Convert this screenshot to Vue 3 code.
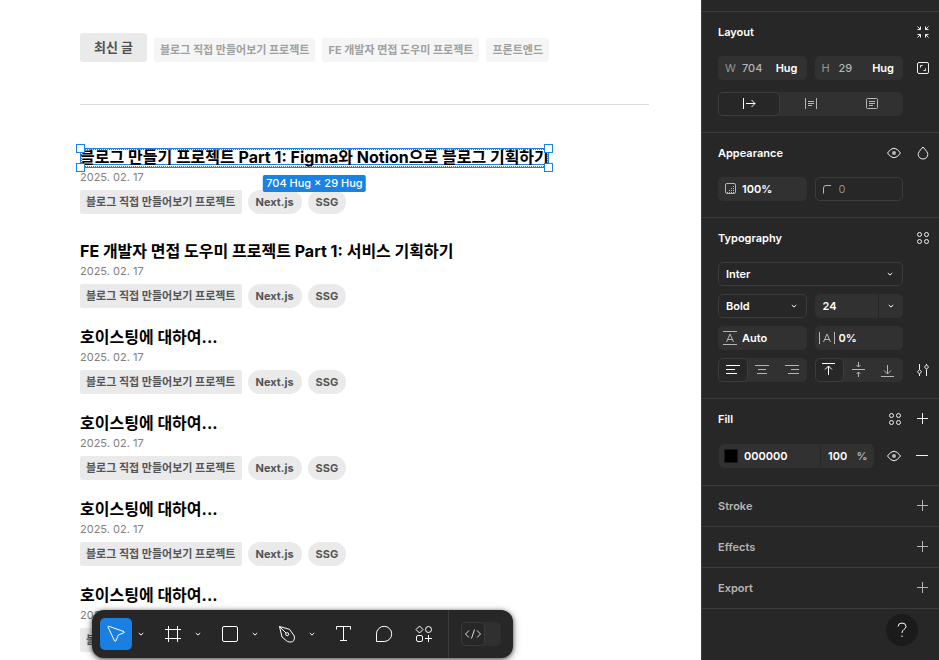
<script setup>
import { ref } from 'vue'

const category = ref('최신 글')
const categories = ['최신 글', '블로그 직접 만들어보기 프로젝트', 'FE 개발자 면접 도우미 프로젝트', '프론트엔드']

const posts = [
  { title: '블로그 만들기 프로젝트 Part 1: Figma와 Notion으로 블로그 기획하기', selected: true },
  { title: 'FE 개발자 면접 도우미 프로젝트 Part 1: 서비스 기획하기' },
  { title: '호이스팅에 대하여...' },
  { title: '호이스팅에 대하여...' },
  { title: '호이스팅에 대하여...' },
  { title: '호이스팅에 대하여...' },
]

const width = ref('704')
const height = ref('29')
const opacity = ref('100%')
const radius = ref('0')
const family = ref('Inter')
const weight = ref('Bold')
const size = ref('24')
const lineHeight = ref('Auto')
const spacing = ref('0%')
const fill = ref('000000')
const fillOpacity = ref('100')
</script>

<template>
  <div class="editor">
    <main class="canvas">
      <nav class="chips">
        <button
          v-for="name in categories"
          :key="name"
          class="chip"
          :class="{ active: name === category }"
          @click="category = name"
        >{{ name }}</button>
      </nav>
      <hr class="rule">
      <section class="posts">
        <article v-for="(post, i) in posts" :key="i" class="post" :class="{ lead: post.selected }">
          <h2 class="title" :class="{ selected: post.selected }">
            {{ post.title }}
            <span v-if="post.selected" class="selection">
              <i class="handle tl"></i><i class="handle tr"></i><i class="handle bl"></i><i class="handle br"></i>
              <span class="size-tag">704 Hug × 29 Hug</span>
            </span>
          </h2>
          <time class="date" datetime="2025-02-17">2025. 02. 17</time>
          <div class="tags">
            <span class="tag series">블로그 직접 만들어보기 프로젝트</span>
            <span class="tag">Next.js</span>
            <span class="tag">SSG</span>
          </div>
        </article>
      </section>

      <div class="toolbar" role="toolbar" aria-label="Tools">
        <div class="tool-group">
          <button class="tool on" aria-label="Move">
            <svg class="i24" viewBox="0 0 24 24"><path d="M4.6 4.2 20 9.6q.9.5 0 1.1l-5.6 2.3-2.6 6q-.7 1-1.2 0L4 5q-.2-.8.6-.8z" /></svg>
          </button>
          <button class="more" aria-label="More move tools"><svg class="chev" viewBox="0 0 8 8"><path d="m1.8 3 2.2 2.1L6.2 3" /></svg></button>
        </div>
        <div class="tool-group">
          <button class="tool" aria-label="Frame">
            <svg class="i24" viewBox="0 0 24 24"><path d="M7.5 4v16M16.5 4v16M4 7.5h16M4 16.5h16" /></svg>
          </button>
          <button class="more" aria-label="More frame tools"><svg class="chev" viewBox="0 0 8 8"><path d="m1.8 3 2.2 2.1L6.2 3" /></svg></button>
        </div>
        <div class="tool-group">
          <button class="tool" aria-label="Rectangle">
            <svg class="i24" viewBox="0 0 24 24"><rect x="4.5" y="4.5" width="15" height="15" rx="1.5" /></svg>
          </button>
          <button class="more" aria-label="More shape tools"><svg class="chev" viewBox="0 0 8 8"><path d="m1.8 3 2.2 2.1L6.2 3" /></svg></button>
        </div>
        <div class="tool-group">
          <button class="tool" aria-label="Pen">
            <svg class="i24" viewBox="0 0 24 24"><path d="M4.5 4.5 14.5 7.3 19.3 14q.6 2-.5 4.6l-1.2 1.1q-3 .8-5.2-.2L7 15zM4.5 4.5l6.7 6.7" /><circle cx="12.2" cy="12.2" r="1.5" /></svg>
          </button>
          <button class="more" aria-label="More drawing tools"><svg class="chev" viewBox="0 0 8 8"><path d="m1.8 3 2.2 2.1L6.2 3" /></svg></button>
        </div>
        <button class="tool" aria-label="Text">
          <svg class="i24" viewBox="0 0 24 24"><path d="M4.5 7.5v-3h14v3M11.5 4.5v14M8 18.5h7" /></svg>
        </button>
        <button class="tool" aria-label="Comment">
          <svg class="i24" viewBox="0 0 24 24"><path d="M4.5 19.5v-7.6a7.6 7.6 0 1 1 7.6 7.6z" /></svg>
        </button>
        <button class="tool" aria-label="Actions">
          <svg class="i24" viewBox="0 0 24 24"><path d="m7.5 4 3.5 3.5L7.5 11 4 7.5zM16.5 13v7M13 16.5h7" /><circle cx="16.5" cy="7.5" r="3" /><rect x="4.5" y="13.5" width="6" height="6" rx="1.5" /></svg>
        </button>
        <span class="split"></span>
        <button class="dev" aria-label="Dev Mode">
          <span class="knob"><svg class="i18" viewBox="0 0 18 18"><path d="M5 5.5 1.5 9 5 12.500M13 5.5 16.5 9 13 12.5M10.5 4.5l-3 9" /></svg></span>
        </button>
      </div>
    </main>

    <aside class="panel">
      <section class="section">
        <header class="head"><h3>Layout</h3>
          <button class="icon" aria-label="Resize to fit"><svg class="i24" viewBox="0 0 24 24"><path d="m6.5 6.5 3 3M6.5 9.5h3v-3M17.5 6.5l-3 3M17.5 9.5h-3v-3M6.5 17.5l3-3M6.5 14.5h3v3M17.5 17.5l-3-3M17.5 14.5h-3v3" /></svg></button>
        </header>
        <div class="rows wide">
          <div class="grid">
            <label class="field muted"><span class="key">W</span><input v-model="width"><b class="hug">Hug</b></label>
            <label class="field muted"><span class="key">H</span><input v-model="height"><b class="hug">Hug</b></label>
            <button class="icon" aria-label="Constrain proportions"><svg class="i24" viewBox="0 0 24 24"><rect x="6.5" y="6.5" width="11" height="11" rx="1.5" /><path d="M9.5 11.5v-2h2M14.5 12.5v2h-2" /></svg></button>
          </div>
          <div class="grid">
            <div class="segments span">
              <button class="on" aria-label="Auto width"><svg class="i24" viewBox="0 0 24 24"><path d="M6.5 6v11M9 11.5h9M14.5 8l3.5 3.5-3.5 3.5" /></svg></button>
              <button aria-label="Auto height"><svg class="i24" viewBox="0 0 24 24"><path d="M6.5 6v11M17.5 6v11M9 9.5h6M9 11.5h6M9 13.5h4" /></svg></button>
              <button aria-label="Fixed size"><svg class="i24" viewBox="0 0 24 24"><rect x="6.5" y="6.5" width="11" height="10" rx="1" /><path d="M9 9.5h6M9 11.5h6M9 13.5h4" /></svg></button>
            </div>
          </div>
        </div>
      </section>

      <section class="section">
        <header class="head"><h3>Appearance</h3>
          <button class="icon" aria-label="Toggle visibility"><svg class="i24" viewBox="0 0 24 24"><path d="M5.500 12q6.500-9.600 13 0-6.500 9.600-13 0z" /><circle class="pupil" cx="12" cy="12" r="2" /></svg></button>
          <button class="icon" aria-label="Blend mode"><svg class="i24" viewBox="0 0 24 24"><path d="M12 6q5 5.300 4.800 7.500a4.800 4.500 0 0 1-9.600 0Q7 11.300 12 6z" /></svg></button>
        </header>
        <div class="grid">
          <label class="field" title="Opacity"><svg class="i16 dim" viewBox="0 0 16 16"><rect x="3.5" y="2.5" width="10" height="10" rx="1.5" /><path class="dots" d="M5 11.5h8M7 9.5h6M9 7.5h4M11 5.5h2" /></svg><input v-model="opacity"></label>
          <label class="field outlined" title="Corner radius"><svg class="i16 dim" viewBox="0 0 16 16"><path d="M4.5 12.5V7q0-2.5 2.5-2.5h5" /></svg><input v-model="radius"></label>
        </div>
      </section>

      <section class="section">
        <header class="head"><h3>Typography</h3>
          <button class="icon" aria-label="Text styles"><svg class="i24" viewBox="0 0 24 24"><circle cx="8.5" cy="8.5" r="2" /><circle cx="15.5" cy="8.5" r="2" /><circle cx="8.5" cy="15.5" r="2" /><circle cx="15.5" cy="15.5" r="2" /></svg></button>
        </header>
        <div class="rows">
          <div class="grid">
            <label class="field outlined span"><select v-model="family" aria-label="Font family"><option>Inter</option></select><svg class="chev" viewBox="0 0 8 8"><path d="m1.8 3 2.2 2.1L6.2 3" /></svg></label>
          </div>
          <div class="grid">
            <label class="field outlined"><select v-model="weight" aria-label="Font weight"><option>Bold</option></select><svg class="chev" viewBox="0 0 8 8"><path d="m1.8 3 2.2 2.1L6.2 3" /></svg></label>
            <div class="field combo"><input v-model="size" aria-label="Font size"><button aria-label="Choose size"><svg class="chev" viewBox="0 0 8 8"><path d="m1.8 3 2.2 2.1L6.2 3" /></svg></button></div>
          </div>
          <div class="grid">
            <label class="field" title="Line height"><svg class="i16 dim" viewBox="0 0 16 16"><path d="M1 1.5h14M1 14.5h14M4.5 12 8 4l3.5 8M5.5 9.5h5" /></svg><input v-model="lineHeight"></label>
            <label class="field" title="Letter spacing"><svg class="i16 dim" viewBox="0 0 16 16"><path d="M.5 2v12M15.5 2v12M4.5 12 8 4l3.5 8M5.5 9.5h5" /></svg><input v-model="spacing"></label>
          </div>
          <div class="grid">
            <div class="segments">
              <button class="on" aria-label="Align left"><svg class="i24" viewBox="0 0 24 24"><path d="M5 7.5h14M5 11.5h9M5 15.5h11" /></svg></button>
              <button aria-label="Align center"><svg class="i24" viewBox="0 0 24 24"><path d="M5 7.5h14M8 11.5h8M7 15.5h10" /></svg></button>
              <button aria-label="Align right"><svg class="i24" viewBox="0 0 24 24"><path d="M5 7.5h14M11 11.5h8M8 15.5h11" /></svg></button>
            </div>
            <div class="segments">
              <button class="on" aria-label="Align top"><svg class="i24" viewBox="0 0 24 24"><path d="M5 5.5h13M11.5 17V8M8 11.5 11.5 8l3.5 3.5" /></svg></button>
              <button aria-label="Align middle"><svg class="i24" viewBox="0 0 24 24"><path d="M5 11.5h13M11.5 4v5M9.5 7l2 2 2-2M11.5 19v-5M9.5 16l2-2 2 2" /></svg></button>
              <button aria-label="Align bottom"><svg class="i24" viewBox="0 0 24 24"><path d="M5 18.5h13M11.5 7v9M8 12.5l3.5 3.5 3.5-3.5" /></svg></button>
            </div>
            <button class="icon" aria-label="Type settings"><svg class="i24" viewBox="0 0 24 24"><path d="M8.5 6v5.5M8.5 16v2M15.5 6v1M15.5 11.5V18" /><path d="m8.5 11.5 2 2.3-2 2.2-2-2.2zM15.5 6.8l2 2.2-2 2.3-2-2.3z" /></svg></button>
          </div>
        </div>
      </section>

      <section class="section fill">
        <header class="head"><h3>Fill</h3>
          <button class="icon" aria-label="Fill styles"><svg class="i24" viewBox="0 0 24 24"><circle cx="8.5" cy="8.5" r="2" /><circle cx="15.5" cy="8.5" r="2" /><circle cx="8.5" cy="15.5" r="2" /><circle cx="15.5" cy="15.5" r="2" /></svg></button>
          <button class="icon" aria-label="Add fill"><svg class="i24" viewBox="0 0 24 24"><path d="M11.5 6v11M6 11.5h11" /></svg></button>
        </header>
        <div class="paint">
          <div class="field paint-field">
            <span class="swatch"></span>
            <input v-model="fill" class="hex" aria-label="Fill colour">
            <input v-model="fillOpacity" class="alpha" aria-label="Fill opacity">
            <span class="unit">%</span>
          </div>
          <button class="icon" aria-label="Toggle fill"><svg class="i24" viewBox="0 0 24 24"><path d="M5.5 12q6.5-9.6 13 0-6.5 9.6-13 0z" /><circle class="pupil" cx="12" cy="12" r="2" /></svg></button>
          <button class="icon" aria-label="Remove fill"><svg class="i24" viewBox="0 0 24 24"><path d="M5 11.5h12" /></svg></button>
        </div>
      </section>

      <section v-for="name in ['Stroke', 'Effects', 'Export']" :key="name" class="section closed">
        <header class="head"><h3>{{ name }}</h3>
          <button class="icon" :aria-label="'Add ' + name"><svg class="i24" viewBox="0 0 24 24"><path d="M11.5 6v11M6 11.5h11" /></svg></button>
        </header>
      </section>
      <div class="section end"></div>

      <button class="help" aria-label="Help">
        <svg class="i24" viewBox="0 0 24 24"><path d="M8 8.5q.3-3.5 4-3.5t4 3.3q0 1.9-2 3.1-2 1.3-2 3.6M12 17.5v1.5" /></svg>
      </button>
    </aside>
  </div>
</template>

<style>
body {
  margin: 0;
}
</style>

<style scoped>
.editor {
  display: grid;
  grid-template-columns: 1fr 238px;
  height: 100vh;
  overflow: hidden;
  background: #fff;
  font-family: Inter, "Noto Sans CJK KR", sans-serif;
  font-size: 11px;
}
.editor * {
  box-sizing: border-box;
}
button,
input,
select {
  font: inherit;
  color: inherit;
  background: none;
  border: 0;
  padding: 0;
  margin: 0;
  min-width: 0;
}
h2,
h3 {
  margin: 0;
}
svg {
  display: block;
  flex: none;
  fill: none;
  stroke: currentColor;
}
.i24 { width: 24px; height: 24px; }
.i18 { width: 18px; height: 18px; }
.i16 { width: 16px; height: 16px; }
.chev { width: 8px; height: 8px; }

/* Canvas */
.canvas {
  position: relative;
  overflow: hidden;
  padding: 33px 52px 0 80px;
}
.chips {
  display: flex;
  align-items: flex-end;
  gap: 7px;
}
.chip {
  height: 24px;
  padding: 0 6px 2px;
  border-radius: 3px;
  background: #f5f5f5;
  color: #a0a0a0;
  font-weight: 700;
  white-space: nowrap;
}
.chip.active {
  height: 29px;
  padding: 0 14px 2px;
  background: #eaeaea;
  color: #505050;
  font-size: 13px;
}
.rule {
  margin: 42px 0 43px;
  border: 0;
  border-top: 1px solid #dcdcdc;
}
.posts {
  display: flex;
  flex-direction: column;
  align-items: flex-start;
  gap: 20px;
}
.post.lead {
  margin-bottom: 8px;
}
.title {
  position: relative;
  width: max-content;
  font-size: 16px;
  line-height: 18px;
  height: 20px;
  font-weight: 700;
  color: #000;
}
.title.selected {
  text-decoration: underline 1px #1a82e2;
  text-underline-offset: 1px;
  text-decoration-skip-ink: none;
}
.selection {
  position: absolute;
  inset: 0;
  border: 1px solid #1a82e2;
}
.selection::before {
  content: "";
  position: absolute;
  inset: 0;
  border: 1px dotted #1a82e2;
}
.handle {
  position: absolute;
  width: 9px;
  height: 9px;
  background: #fff;
  border: 1px solid #1a82e2;
}
.tl { left: -5px; top: -5px; }
.tr { right: -5px; top: -5px; }
.bl { left: -5px; bottom: -5px; }
.br { right: -5px; bottom: -5px; }
.size-tag {
  position: absolute;
  left: 50%;
  top: 26px;
  transform: translateX(-50%);
  padding: 0 3px;
  border-radius: 2px;
  background: #1a82e2;
  color: #fff;
  font-size: 11px;
  font-weight: 500;
  line-height: 17px;
  white-space: nowrap;
}
.date {
  display: block;
  line-height: 18px;
  height: 18px;
  color: #808080;
}
.tags {
  display: flex;
  gap: 6px;
  margin-top: 4px;
}
.tag {
  height: 24px;
  line-height: 24px;
  padding: 0 8px;
  border-radius: 12px;
  background: #eaeaea;
  color: #555;
  font-weight: 700;
  white-space: nowrap;
}
.tag.series {
  padding: 0 6px;
  border-radius: 2px;
}

/* Toolbar */
.toolbar {
  position: absolute;
  left: 92px;
  bottom: 2px;
  display: flex;
  align-items: center;
  gap: 8px;
  padding: 8px 12px 8px 8px;
  border-radius: 12px;
  background: #272727;
  color: #fff;
  box-shadow: 0 1px 4px rgba(0, 0, 0, 0.6), 0 2px 10px rgba(0, 0, 0, 0.3);
}
.tool-group {
  display: flex;
}
.tool {
  display: grid;
  place-items: center;
  width: 32px;
  height: 32px;
  border-radius: 5px;
}
.tool.on {
  background: #1a7fe3;
}
.more {
  display: grid;
  place-items: center;
  width: 17px;
}
.split {
  align-self: stretch;
  width: 1px;
  margin: -8px 4px -8px 0;
  background: #3c3c3c;
}
.dev {
  width: 40px;
  height: 24px;
  border-radius: 5px;
  background: #303030;
  color: #dcdcdc;
}
.knob {
  display: grid;
  place-items: center;
  width: 24px;
  height: 24px;
  border: 1px solid #3a3a3a;
  border-radius: 5px;
  background: #272727;
}

/* Properties panel */
.panel {
  position: relative;
  border-left: 1px solid #3c3c3c;
  padding-top: 11px;
  background: #272727;
  color: #fff;
  font-weight: 500;
}
.section {
  border-top: 1px solid #3c3c3c;
  padding: 0 4px 16px 16px;
}
.section.fill {
  padding-bottom: 17px;
}
.section.closed {
  padding-bottom: 0;
  color: #b5b5b5;
}
.section.end {
  padding: 0;
}
.head {
  display: flex;
  align-items: center;
  gap: 5px;
  height: 40px;
}
.head h3 {
  flex: 1;
  font-size: 11px;
  font-weight: 600;
}
.fill .head {
  gap: 4px;
}
.icon {
  display: grid;
  place-items: center;
  width: 24px;
  height: 24px;
  color: #f0f0f0;
}
.closed .icon {
  color: #b5b5b5;
}
.pupil {
  fill: #b5b5b5;
  stroke: none;
}
.rows {
  display: flex;
  flex-direction: column;
  gap: 8px;
}
.rows.wide {
  gap: 12px;
}
.grid {
  display: grid;
  grid-template-columns: 1fr 1fr 24px;
  gap: 8px;
}
.head + .grid,
.head + .rows {
  margin-top: 4px;
}
.span {
  grid-column: span 2;
}
.field {
  display: flex;
  align-items: center;
  gap: 4px;
  height: 24px;
  padding: 0 8px 0 4px;
  border-radius: 5px;
  background: #313131;
  font-weight: 600;
}
.field input,
.field select {
  flex: 1;
  width: 0;
  height: 22px;
  outline: 0;
  appearance: none;
}
.field.muted {
  padding: 0 9px 0 7px;
  color: #b5b5b5;
  font-weight: 500;
}
.key {
  width: 13px;
  color: #969696;
  font-weight: 400;
}
.hug {
  color: #fff;
  font-weight: 600;
}
.field.outlined {
  border: 1px solid #3c3c3c;
  background: none;
  padding: 0 8px 0 3px;
}
.field.outlined select {
  padding-left: 4px;
}
.field.outlined input {
  color: #8c8c8c;
  font-weight: 400;
}
.dim {
  color: #b5b5b5;
}
.dots {
  stroke-dasharray: 1 1;
}
.field.combo {
  padding: 0 0 0 8px;
}
.combo button {
  display: grid;
  place-items: center;
  width: 25px;
  height: 24px;
  border-left: 1px solid #272727;
}
.segments {
  display: flex;
  height: 24px;
  border-radius: 5px;
  background: #313131;
  color: #b5b5b5;
}
.segments button {
  display: grid;
  place-items: center;
  flex: 1;
  border: 1px solid transparent;
  border-radius: 5px;
}
.segments .i24 {
  margin: -1px;
}
.segments .on {
  border-color: #3c3c3c;
  background: #272727;
  color: #fff;
}
.paint {
  display: flex;
  align-items: center;
  gap: 5px;
  margin-top: 5px;
}
.field.paint-field {
  flex: 1;
  gap: 0;
  margin: 0 3px 0 1px;
  padding: 0 5px;
}
.swatch {
  width: 14px;
  height: 14px;
  margin-right: 6px;
  border: 1px solid #1a1a1a;
  background: #000;
}
.paint-field .alpha {
  flex: none;
  width: 35px;
  height: 24px;
  padding-left: 7px;
  border-left: 1px solid #272727;
}
.unit {
  width: 14px;
  text-align: center;
  color: #b5b5b5;
}
.help {
  position: absolute;
  right: 21px;
  bottom: 14px;
  display: grid;
  place-items: center;
  width: 32px;
  height: 32px;
  border-radius: 50%;
  background: #1b1b1b;
}
</style>
